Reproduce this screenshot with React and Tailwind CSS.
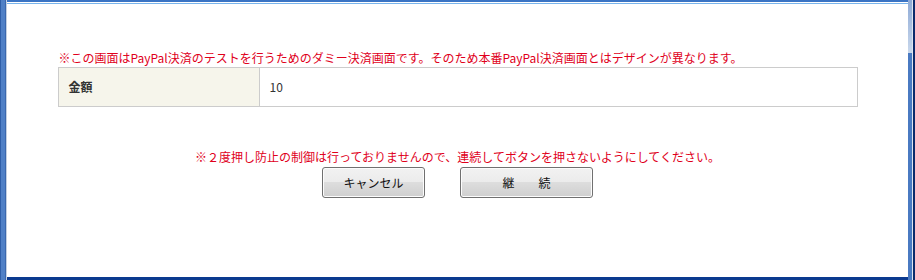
import React from 'react';

const font = { fontFamily: '"Noto Sans CJK JP", "Noto Sans", sans-serif' };

function Button({ children, width }) {
    return (
        <button
            className={`${width} h-[31px] rounded-[3px] border border-[#707070] text-[12px] text-[#111] shadow-[inset_0_0_0_1px_#fcfcfc] bg-[linear-gradient(to_bottom,#f2f2f2_0%,#ebebeb_50%,#dddddd_50%,#cfcfcf_100%)]`}
        >
            {children}
        </button>
    );
}

export default function App() {
    return (
        <div className="w-[915px] h-[280px] flex bg-white overflow-hidden" style={font}>
            {/* left frame */}
            <div className="w-[7px] flex shrink-0">
                <div className="w-[1px] bg-[#2f5fa8]"></div>
                <div className="w-[4px] bg-[#4f80c6]"></div>
                <div className="w-[1px] bg-[#3a68ae]"></div>
                <div className="w-[1px] bg-[#c3d0e2]"></div>
            </div>

            <div className="flex-1 flex flex-col">
                {/* top lines */}
                <div className="h-[2px] bg-[#3b74c4]"></div>
                <div className="h-[1px] bg-white"></div>
                <div className="h-[1px] bg-[#79b4ec]"></div>

                <div className="flex-1 flex flex-col items-center pt-[46px]">
                    <div className="w-[800px]">
                        <p className="text-[12px] leading-[15px] text-[#e0001b] pl-[1px]">
                            ※この画面はPayPal決済のテストを行うためのダミー決済画面です。そのため本番PayPal決済画面とはデザインが異なります。
                        </p>
                        <table className="mt-[2px] w-[800px] border-collapse text-[12px] text-[#333]">
                            <tbody>
                                <tr className="h-[39px]">
                                    <th className="w-[201px] border border-[#cccccc] bg-[#f6f5eb] text-left font-bold pl-[10px]">金額</th>
                                    <td className="border border-[#cccccc] pl-[10px]">10</td>
                                </tr>
                            </tbody>
                        </table>
                    </div>

                    <p className="mt-[42px] text-[12px] leading-[15px] text-[#e0001b]">
                        ※２度押し防止の制御は行っておりませんので、連続してボタンを押さないようにしてください。
                    </p>
                    <div className="mt-[3px] flex gap-[35px]">
                        <Button width="w-[103px]">キャンセル</Button>
                        <Button width="w-[133px]">継　　続</Button>
                    </div>
                </div>

                {/* bottom line */}
                <div className="h-[3px] bg-[#0b3a8f]"></div>
            </div>

            {/* right frame */}
            <div className="w-[7px] flex shrink-0">
                <div className="w-[4px] flex flex-col">
                    <div className="h-[53px] bg-[linear-gradient(to_bottom,#8eaad6,#c9d8ec)]"></div>
                    <div className="flex-1 bg-[#4a7ac2]"></div>
                </div>
                <div className="w-[1px] bg-[#dfe6f0]"></div>
                <div className="w-[2px] bg-[#0c2b6c]"></div>
            </div>
        </div>
    );
}
